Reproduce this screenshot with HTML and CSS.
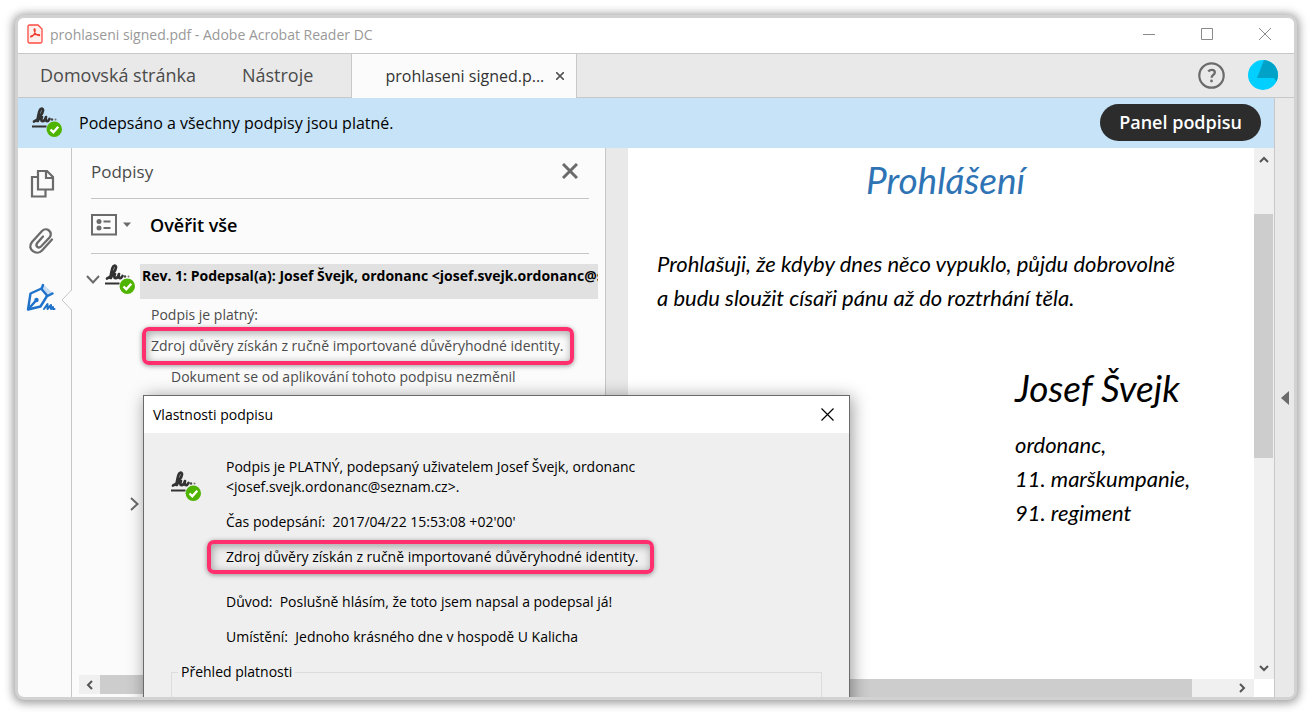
FILE: index.html
```html
<!DOCTYPE html>
<html lang="cs">
  <head>
    <meta charset="UTF-8" />
    <meta name="viewport" content="width=device-width, initial-scale=1.0" />
    <title>prohlaseni signed.pdf - Adobe Acrobat Reader DC</title>
    <link rel="stylesheet" href="styles.css">
  </head>
  <body>
    <!-- signature icon, used in the banner, the tree and the dialog -->
    <svg class="defs" aria-hidden="true">
      <symbol id="signed" viewBox="0 0 30 31">
        <path d="M2 15.500c4-1.500 8.500-7 9-11 .1-2.500-2.600-2.500-3.500.500-1 3.500-2 7-1.700 10 .8-2.500 3-4 4.200-4-1 2-1 4.200.5 4.200 1.800 0 3-2.200 3.500-4.200-.7 2.500-.2 4.400 1.300 4.200 1.200-.2 1.700-1.200 2.200-2.200" fill="none" stroke="#333" stroke-width="2.700" stroke-linecap="round" stroke-linejoin="round"/>
        <path d="M0 20.500h14.500" stroke="#333" stroke-width="2"/>
        <circle cx="20" cy="13.500" r="1.200" fill="#444"/>
        <circle cx="23.500" cy="13.500" r="1" fill="#777"/>
        <circle cx="22.300" cy="23.300" r="7.700" fill="#4fb400"/>
        <path d="M18.500 23.500l2.800 2.700 5-5.400" fill="none" stroke="#fff" stroke-width="2.400"/>
      </symbol>
    </svg>

    <div class="window">
      <header class="titlebar">
        <svg class="pdf-icon" width="16" height="20" viewBox="0 0 16 20">
          <path d="M2.500 1h8.500l4 4v12.500a1.500 1.500 0 0 1-1.500 1.500h-11A1.500 1.500 0 0 1 1 17.500v-15A1.500 1.500 0 0 1 2.500 1z" fill="#fff0ee" stroke="#ff4a40" stroke-width="1.300"/>
          <path d="M4 13c2-.5 4.500-4 4.200-7.500-.2-1.200-1.400-.8-1.200.5.3 2.500 2.500 5.200 4.800 5.700 1.200.2 1.200-1.100 0-1.200-2.300-.2-5 .2-7.300 1.300C3.300 12.400 3.400 13.200 4 13z" fill="none" stroke="#f0392f" stroke-width="1.100"/>
        </svg>
        <span class="app-title">prohlaseni signed.pdf - Adobe Acrobat Reader DC</span>
        <div class="window-buttons">
          <button aria-label="Minimalizovat"><svg width="12" height="12"><path d="M0 6.500h12" stroke="#8a8a8a"/></svg></button>
          <button aria-label="Maximalizovat"><svg width="12" height="12"><path d="M.5.500h11v11H.500z" fill="none" stroke="#8a8a8a"/></svg></button>
          <button aria-label="Zavřít"><svg width="12" height="12"><path d="M0 0l12 12M12 0L0 12" stroke="#8a8a8a"/></svg></button>
        </div>
      </header>

      <nav class="tabs">
        <a class="tab" href="#home">Domovská stránka</a>
        <a class="tab" href="#tools">Nástroje</a>
        <div class="tab-active">
          <a href="#doc">prohlaseni signed.p...</a>
          <button aria-label="Zavřít kartu"><svg width="8" height="8"><path d="M0 0l8 8M8 0L0 8" stroke="#555" stroke-width="1.600"/></svg></button>
        </div>
        <div class="tabs-right">
          <button aria-label="Nápověda">
            <svg width="27" height="27" viewBox="0 0 27 27" fill="none" stroke="#6b6b6b">
              <circle cx="13.500" cy="13.500" r="12.200" stroke-width="2.200"/>
              <path d="M10.300 9.500c1-1.300 2.200-1.700 3.500-1.700 1.800 0 3 1 3 2.600 0 2.600-3.200 2.400-3.200 5.300" stroke-width="2.300"/>
              <circle cx="13.500" cy="19" r=".6" stroke-width="1.600"/>
            </svg>
          </button>
          <button aria-label="Účet">
            <svg width="30" height="30" viewBox="0 0 30 30">
              <circle cx="15" cy="15" r="15" fill="#00cfff"/>
              <path d="M16 0a15 15 0 0 1 12.500 21.500L26 18H9z" fill="#00a2c8"/>
            </svg>
          </button>
        </div>
      </nav>

      <div class="workspace">
        <div class="content">
          <div class="banner">
            <svg class="signed-icon" width="30" height="31"><use href="#signed"/></svg>
            <span class="banner-text">Podepsáno a všechny podpisy jsou platné.</span>
            <button class="panel-button">Panel podpisu</button>
          </div>

          <div class="columns">
            <div class="side-icons">
              <button aria-label="Miniatury stránek">
                <svg width="28" height="30" viewBox="0 0 28 30" fill="none" stroke="#6b6b6b" stroke-width="2.200">
                  <path d="M10 2h9l6 6v12.500H10z"/>
                  <path d="M18 2.500V9h6.500"/>
                  <path d="M10 8H4v19.500h13.500V21"/>
                </svg>
              </button>
              <button aria-label="Přílohy">
                <svg width="30" height="30" viewBox="0 0 30 30" fill="none" stroke="#6b6b6b" stroke-width="2.300" stroke-linecap="round">
                  <path d="M25 13.500L15 24.500c-5 5.500-16-1-10-8.500L15 5c4.500-4.500 11.500 1 7.500 6.500L14 20.500c-2.700 2.500-6-.500-3.800-3.500L16 10.500"/>
                </svg>
              </button>
              <button aria-label="Podpisy">
                <svg width="32" height="30" viewBox="0 0 32 30" fill="none" stroke="#1f72c9" stroke-width="2.400" stroke-linejoin="round" stroke-linecap="round">
                  <path d="M18 2l9 8-4 3-7-7z" fill="#c8dcf2" stroke="none"/>
                  <path d="M17 2l-1.500 4 6 7 5-2.500"/>
                  <path d="M15.500 5.500L4.500 10.500 2 26.500l12.500-3L21 13"/>
                  <path d="M2.500 26L10 17.500"/>
                  <circle cx="10.500" cy="17" r="1" fill="#1f72c9"/>
                  <path d="M18 26l3.500-5v5l3.500-4v4l2-2v2h1.500" stroke-width="2"/>
                </svg>
              </button>
              <svg class="notch" width="11" height="20"><path d="M11 0L1 10l10 10z" fill="#fbfbfb"/><path d="M10.500 0L1 10l9.500 10" fill="none" stroke="#c6c6c6"/></svg>
            </div>

            <section class="panel">
              <div class="panel-head">
                <h2>Podpisy</h2>
                <button aria-label="Zavřít panel"><svg width="16" height="16"><path d="M1 1l14 14M15 1L1 15" stroke="#6b6b6b" stroke-width="3"/></svg></button>
              </div>
              <div class="panel-tools">
                <button class="options" aria-label="Možnosti">
                  <svg width="40" height="22" viewBox="0 0 40 22">
                    <path d="M1 1h24v19.500H1z" fill="none" stroke="#6b6b6b" stroke-width="2"/>
                    <circle cx="8" cy="7.500" r="2.500" fill="#6b6b6b"/><circle cx="8" cy="14" r="2.500" fill="#6b6b6b"/>
                    <path d="M12.500 7.500h7M12.500 14h7" stroke="#6b6b6b" stroke-width="2"/>
                    <path d="M32 8.500h8l-4 4.500z" fill="#6b6b6b"/>
                  </svg>
                </button>
                <button class="verify">Ověřit vše</button>
              </div>
              <div class="tree-row">
                <button class="expander" aria-label="Sbalit"><svg width="14" height="9"><path d="M1 1l6 6.500L13 1" fill="none" stroke="#6b6b6b" stroke-width="2"/></svg></button>
                <svg class="signed-icon" width="30" height="31"><use href="#signed"/></svg>
                <strong>Rev. 1: Podepsal(a): Josef Švejk, ordonanc &lt;josef.svejk.ordonanc@seznam.cz&gt;</strong>
              </div>
              <div class="details">
                <p>Podpis je platný:</p>
                <p class="callout">Zdroj důvěry získán z ručně importované důvěryhodné identity.</p>
                <p class="nested">Dokument se od aplikování tohoto podpisu nezměnil</p>
              </div>
              <button class="more" aria-label="Rozbalit"><svg width="9" height="14"><path d="M1 1l6.500 6L1 13" fill="none" stroke="#6b6b6b" stroke-width="2"/></svg></button>
              <div class="hscroll panel-scroll">
                <button aria-label="Vlevo"><svg width="7" height="10"><path d="M6 1L2 5l4 4" fill="none" stroke="#555" stroke-width="2"/></svg></button>
                <div class="thumb"></div>
              </div>
            </section>

            <main class="viewer">
              <article class="page">
                <h1>Prohlášení</h1>
                <p>Prohlašuji, že kdyby dnes něco vypuklo, půjdu dobrovolně<br>a budu sloužit císaři pánu až do roztrhání těla.</p>
                <div class="signer">
                  <h3>Josef Švejk</h3>
                  <p>ordonanc,<br>11. marškumpanie,<br>91. regiment</p>
                </div>
              </article>
              <div class="vscroll">
                <button aria-label="Nahoru"><svg width="10" height="7"><path d="M1 6l4-4 4 4" fill="none" stroke="#555" stroke-width="2"/></svg></button>
                <div class="track"><div class="thumb"></div></div>
                <button aria-label="Dolů"><svg width="10" height="7"><path d="M1 1l4 4 4-4" fill="none" stroke="#555" stroke-width="2"/></svg></button>
              </div>
              <div class="hscroll viewer-scroll">
                <div class="thumb"></div>
                <button aria-label="Vpravo"><svg width="7" height="10"><path d="M1 1l4 4-4 4" fill="none" stroke="#555" stroke-width="2"/></svg></button>
              </div>
            </main>
          </div>
        </div>
        <button class="right-rail" aria-label="Zobrazit nástroje"><svg width="8" height="14"><path d="M8 0v14L0 7z" fill="#6b6b6b"/></svg></button>
      </div>

      <div class="dialog" role="dialog" aria-labelledby="dialog-title">
        <div class="dialog-head">
          <span id="dialog-title">Vlastnosti podpisu</span>
          <button aria-label="Zavřít"><svg width="13" height="13"><path d="M.5.500l12 12M12.500.500l-12 12" stroke="#000" stroke-width="1.200"/></svg></button>
        </div>
        <div class="dialog-body">
          <div class="dialog-info">
            <svg class="signed-icon" width="30" height="31"><use href="#signed"/></svg>
            <div class="dialog-text">
              <p>Podpis je PLATNÝ, podepsaný uživatelem Josef Švejk, ordonanc<br>&lt;josef.svejk.ordonanc@seznam.cz&gt;.</p>
              <p>Čas podepsání:&nbsp; 2017/04/22 15:53:08 +02'00'</p>
              <p class="callout">Zdroj důvěry získán z ručně importované důvěryhodné identity.</p>
              <p>Důvod:&nbsp; Poslušně hlásím, že toto jsem napsal a podepsal já!</p>
              <p>Umístění:&nbsp; Jednoho krásného dne v hospodě U Kalicha</p>
            </div>
          </div>
          <fieldset>
            <legend>Přehled platnosti</legend>
          </fieldset>
        </div>
      </div>
    </div>
  </body>
</html>
```
FILE: styles.css
```css
* {
  box-sizing: border-box;
}

body {
  margin: 0;
  padding: 15px;
  height: 100vh;
  background: #fff;
  font-family: "Segoe UI", "Open Sans", "Noto Sans", sans-serif;
  font-size: 14px;
  color: #000;
}

h1, h2, h3, p {
  margin: 0;
  font-weight: 400;
}

a {
  color: inherit;
  text-decoration: none;
}

button {
  display: flex;
  align-items: center;
  justify-content: center;
  padding: 0;
  border: none;
  background: none;
  font: inherit;
  color: inherit;
  cursor: pointer;
}

svg {
  display: block;
  flex: none;
}

.defs {
  position: absolute;
  width: 0;
  height: 0;
}

.window {
  position: relative;
  display: flex;
  flex-direction: column;
  height: 100%;
  border: 3px solid #d2d2d2;
  border-radius: 9px;
  background: #fbfbfb;
  box-shadow: 0 1px 10px 2px rgba(0, 0, 0, 0.4);
  overflow: hidden;
}

/* title bar */
.titlebar {
  display: flex;
  align-items: center;
  flex: none;
  height: 36px;
  padding: 0 0 3px 9px;
  background: #fff;
  border-bottom: 1px solid #c8c8c8;
}

.app-title {
  margin-left: 7px;
  color: #999;
}

.window-buttons {
  display: flex;
  height: 32px;
  margin-left: auto;
}

.window-buttons button {
  width: 58px;
}

/* tabs */
.tabs {
  display: flex;
  flex: none;
  height: 44px;
  background: #e9e9e9;
  font-size: 18px;
  color: #4b4b4b;
  box-shadow: inset 0 -1px #c8c8c8;
}

.tab {
  padding: 0 24px 0 22px;
  line-height: 42px;
}

.tab-active {
  display: flex;
  align-items: center;
  justify-content: flex-end;
  width: 226px;
  margin-left: 14px;
  padding-right: 12px;
  border: 1px solid #c8c8c8;
  border-width: 0 1px;
  background: #fbfbfb;
  font-size: 16px;
  color: #333;
}

.tab-active button {
  margin-left: 12px;
}

.tabs-right {
  display: flex;
  align-items: center;
  gap: 23px;
  margin-left: auto;
  padding: 0 16px 2px 0;
}

.workspace {
  display: flex;
  flex: 1;
  min-height: 0;
}

.content {
  display: flex;
  flex-direction: column;
  flex: 1;
  min-width: 0;
}

.right-rail {
  width: 20px;
  background: #e9e9e9;
  border-left: 1px solid #c8c8c8;
}

/* signature status banner */
.banner {
  display: flex;
  align-items: center;
  flex: none;
  height: 50px;
  padding: 0 13px 0 14px;
  background: #c7e3f7;
  font-size: 16px;
}

.banner .signed-icon {
  margin-bottom: 4px;
}

.banner-text {
  margin-left: 17px;
}

.panel-button {
  height: 37px;
  margin: 0 0 2px auto;
  padding: 0 19px;
  border-radius: 19px;
  background: #2c2c2c;
  color: #fff;
  font-size: 18px;
  font-weight: 600;
}

.columns {
  display: flex;
  flex: 1;
  min-height: 0;
}

/* icon strip */
.side-icons {
  position: relative;
  display: flex;
  flex-direction: column;
  align-items: center;
  gap: 27px;
  flex: none;
  width: 54px;
  padding: 21px 6px 0 0;
  border-right: 1px solid #c6c6c6;
}

.notch {
  position: absolute;
  top: 142px;
  right: -1px;
}

/* signatures panel */
.panel {
  display: flex;
  flex-direction: column;
  flex: none;
  width: 534px;
  padding-left: 7px;
  border-right: 1px solid #c6c6c6;
}

.panel-head,
.panel-tools {
  display: flex;
  align-items: center;
  flex: none;
  margin: 0 16px 0 12px;
  border-bottom: 1px solid #c6c6c6;
}

.panel-head {
  justify-content: space-between;
  height: 51px;
  padding: 0 11px 4px 0;
  color: #4b4b4b;
}

.panel-head h2 {
  font-size: 17px;
}

.panel-tools {
  height: 55px;
  padding-bottom: 3px;
}

.verify {
  margin-left: 19px;
  font-size: 18px;
  font-weight: 600;
}

.tree-row {
  display: flex;
  flex: none;
  height: 35px;
  margin: 10px 7px 0;
}

.tree-row .signed-icon {
  margin: -1px 5px 0;
}

.expander {
  height: 30px;
}

.tree-row strong {
  flex: 1;
  padding-left: 2px;
  background: #e1e1e1;
  font-size: 14px;
  line-height: 24px;
  white-space: nowrap;
  overflow: hidden;
}

.details {
  padding: 4px 0 0 72px;
  line-height: 24px;
  color: #4b4b4b;
  white-space: nowrap;
}

.details .nested {
  padding-left: 20px;
}

.callout {
  width: max-content;
  padding: 0 7px 0 5px;
  border: 4px solid #ff2f6d;
  border-radius: 7px;
  box-shadow: 0 1px 5px rgba(0, 0, 0, 0.4), inset 1px 2px 8px rgba(0, 0, 0, 0.35);
}

.details .callout {
  margin-left: -9px;
  line-height: 30px;
}

.more {
  width: 9px;
  margin: 108px 0 0 51px;
}

/* scroll bars */
.hscroll {
  display: flex;
  background: #f0f0f0;
}

.hscroll button {
  width: 21px;
}

.hscroll .thumb {
  flex: 1;
  background: #cdcdcd;
}

.panel-scroll {
  height: 19px;
  margin: auto 7px 3px 0;
}

.viewer {
  display: grid;
  grid-template: 1fr 18px / 1fr 20px;
  flex: 1;
  min-width: 0;
  padding-left: 22px;
  background: linear-gradient(to right, #e9e9e9 22px, #fff 22px);
}

.viewer-scroll button {
  width: 23px;
  margin-left: 39px;
}

.vscroll {
  display: flex;
  flex-direction: column;
  background: #f0f0f0;
}

.vscroll button {
  height: 22px;
}

.vscroll .track {
  flex: 1;
  padding-top: 44px;
}

.vscroll .thumb {
  height: 55%;
  margin-right: 1px;
  background: #cdcdcd;
}

/* the document */
.page {
  padding: 10px 0 0 29px;
  font-family: "Segoe Print", Lato, "Open Sans", cursive;
  font-size: 22px;
  font-style: italic;
  line-height: 34px;
  white-space: nowrap;
}

.page h1 {
  margin: 0 20px 45px 0;
  color: #2e74b5;
  font-size: 37px;
  line-height: 44px;
  text-align: center;
}

.signer {
  width: 239px;
  margin: 49px 0 0 auto;
}

.signer h3 {
  margin-bottom: 16px;
  font-size: 37px;
  line-height: 48px;
}

/* signature properties dialog */
.dialog {
  position: absolute;
  left: 125px;
  top: 377px;
  width: 707px;
  height: 340px;
  border: 1px solid #6a6a6a;
  background: #efefef;
  box-shadow: 2px 2px 16px rgba(0, 0, 0, 0.4);
  white-space: nowrap;
}

.dialog-head {
  display: flex;
  align-items: center;
  justify-content: space-between;
  height: 37px;
  padding: 0 15px 0 9px;
  background: #fff;
}

.dialog-body {
  padding: 24px 27px;
}

.dialog-info {
  display: flex;
  gap: 25px;
}

.dialog-info .signed-icon {
  margin-top: 13px;
}

.dialog-text {
  line-height: 20px;
}

.dialog-text p {
  margin-bottom: 15px;
}

.dialog-text .callout {
  margin: -7px 0 18px -19px;
  padding: 0 12px 0 15px;
  line-height: 26px;
}

.dialog fieldset {
  height: 80px;
  margin: 0;
  padding: 0 6px;
  border: 1px solid #dcdcdc;
}

.dialog legend {
  padding: 0 3px;
  line-height: 20px;
}
```
